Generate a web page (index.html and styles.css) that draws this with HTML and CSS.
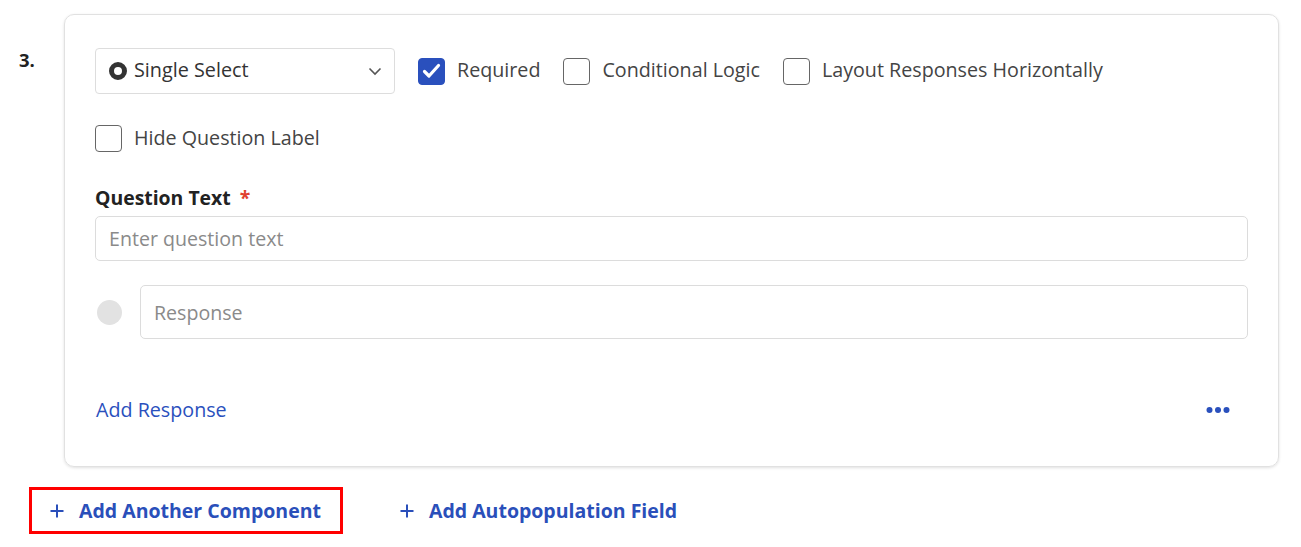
FILE: index.html
```html
<!DOCTYPE html>
<html>
<head>
<meta charset="utf-8">
<link rel="stylesheet" href="styles.css">
</head>
<body>
<div class="page">
  <div class="item">
    <div class="num">3.</div>
    <div class="card">
      <div class="toprow">
        <div class="select">
          <svg class="radio-ic" width="18" height="18" viewBox="0 0 18 18"><circle cx="9" cy="9" r="6.5" fill="none" stroke="#333" stroke-width="5"/></svg>
          <span class="select-text">Single Select</span>
          <svg class="chev" width="14" height="9" viewBox="0 0 14 9"><path d="M1.5 1.5 L7 7 L12.5 1.5" fill="none" stroke="#555" stroke-width="1.6"/></svg>
        </div>
        <label class="check">
          <span class="box checked"><svg width="19" height="16" viewBox="0 0 19 16"><path d="M2.5 8.5 L7 13 L16.5 2.5" fill="none" stroke="#fff" stroke-width="3.2" stroke-linecap="round" stroke-linejoin="round"/></svg></span>
          <span class="lbl">Required</span>
        </label>
        <label class="check">
          <span class="box"></span>
          <span class="lbl">Conditional Logic</span>
        </label>
        <label class="check">
          <span class="box"></span>
          <span class="lbl">Layout Responses Horizontally</span>
        </label>
      </div>
      <div class="hiderow">
        <label class="check">
          <span class="box"></span>
          <span class="lbl">Hide Question Label</span>
        </label>
      </div>
      <div class="qlabel">Question Text <span class="req">*</span></div>
      <div class="input qinput"><span class="ph">Enter question text</span></div>
      <div class="resprow">
        <span class="dot"></span>
        <div class="input rinput"><span class="ph">Response</span></div>
      </div>
      <div class="footrow">
        <span class="link">Add Response</span>
        <svg class="more" width="24" height="8" viewBox="0 0 24 8"><circle cx="3.5" cy="4" r="3" fill="#2a50bd"/><circle cx="12" cy="4" r="3" fill="#2a50bd"/><circle cx="20.5" cy="4" r="3" fill="#2a50bd"/></svg>
      </div>
    </div>
  </div>
  <div class="actions">
    <div class="action highlighted"><svg class="plus" width="14" height="14" viewBox="0 0 14 14"><path d="M7 0.5 V13.5 M0.5 7 H13.5" stroke="#2a4fba" stroke-width="2"/></svg>Add Another Component</div>
    <div class="action"><svg class="plus" width="14" height="14" viewBox="0 0 14 14"><path d="M7 0.5 V13.5 M0.5 7 H13.5" stroke="#2a4fba" stroke-width="2"/></svg>Add Autopopulation Field</div>
  </div>
</div>
</body>
</html>
```
FILE: styles.css
```css
* { box-sizing: border-box; }
html, body { margin: 0; background: #fff; }
body {
  font-family: "Open Sans", "Noto Sans", sans-serif;
  color: #333;
}
.page { padding-top: 14px; }
.item { display: flex; }
.num {
  width: 64px;
  padding-left: 19px;
  padding-top: 33px;
  font-weight: 700;
  font-size: 18.5px;
  color: #222;
}
.card {
  width: 1215px;
  height: 453px;
  border: 1px solid #e1e1e1;
  border-radius: 10px;
  box-shadow: 0 1px 3px rgba(0,0,0,0.12);
  padding: 33px 30px 0 30px;
}
.toprow { display: flex; align-items: center; height: 46px; }
.select {
  width: 300px;
  height: 46px;
  border: 1px solid #ddd;
  border-radius: 4px;
  display: flex;
  align-items: center;
  padding: 0 12px 0 13px;
  margin-right: 23px;
}
.radio-ic { flex: none; margin-right: 7px; }
.select-text { flex: 1; font-size: 19.8px; color: #333; line-height: 1; padding-bottom: 2px; }
.chev { flex: none; }
.check { display: flex; align-items: center; margin-right: 23px; }
.box {
  width: 27px;
  height: 27px;
  border: 1.5px solid #666;
  border-radius: 4px;
  margin-right: 12px;
  display: flex;
  align-items: center;
  justify-content: center;
  background: #fff;
}
.box.checked { background: #2a50bd; border-color: #2a50bd; }
.lbl { font-size: 19.7px; color: #444; line-height: 1; padding-bottom: 2px; }
.hiderow { margin-top: 31px; height: 27px; display: flex; }
.qlabel {
  margin-top: 33px;
  font-size: 19.4px;
  font-weight: 700;
  color: #222;
  height: 26px;
  line-height: 26px;
}
.req { color: #e0412f; margin-left: 4px; }
.input {
  border: 1px solid #dcdcdc;
  border-radius: 5px;
  display: flex;
  align-items: center;
  padding-left: 13px;
}
.qinput { margin-top: 5px; height: 45px; }
.ph { font-size: 19.6px; color: #8a8a8a; }
.resprow { display: flex; align-items: center; margin-top: 24px; }
.dot {
  width: 25px;
  height: 25px;
  border-radius: 50%;
  background: #e2e2e2;
  margin-left: 2px;
  margin-right: 18px;
  flex: none;
}
.rinput { flex: 1; height: 54px; }
.footrow {
  margin-top: 56px;
  display: flex;
  align-items: center;
  justify-content: space-between;
  padding-right: 18px;
  height: 28px;
}
.link { font-size: 19.7px; color: #2a50bd; margin-left: 1px; }
.more { position: relative; top: 1px; }
.actions { display: flex; align-items: center; margin-top: 20px; padding-left: 29px; }
.action {
  display: flex;
  align-items: center;
  font-size: 19.5px;
  font-weight: 700;
  color: #2a4fba;
  height: 47px;
  padding: 0 19px 0 18px;
}
.action.highlighted { border: 3px solid #f00; margin-right: 39px; }
.plus { flex: none; margin-right: 15px; }
```
